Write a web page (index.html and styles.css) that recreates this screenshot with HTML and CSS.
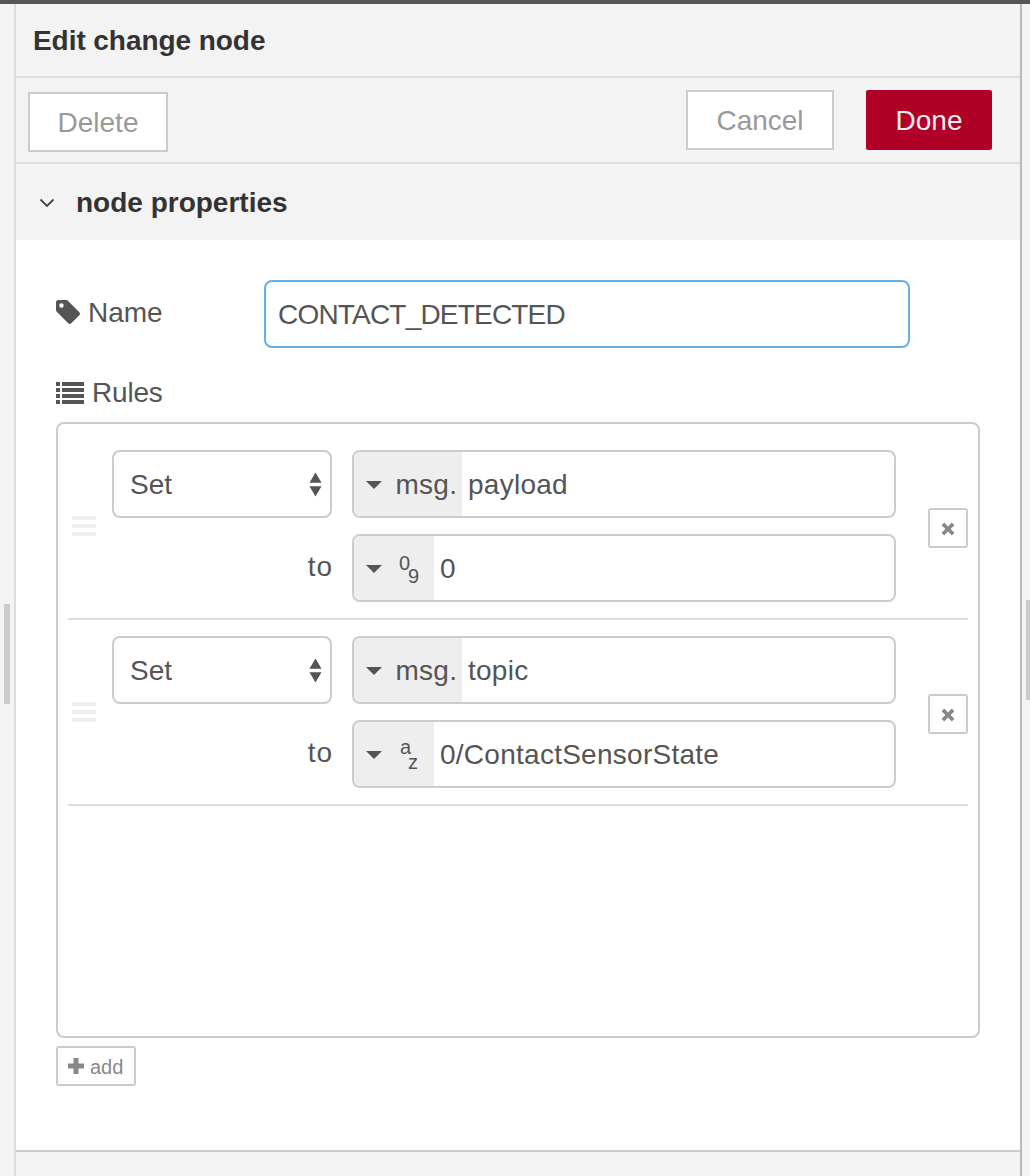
FILE: index.html
```html
<!DOCTYPE html>
<html lang="en">
<head>
<meta charset="utf-8">
<title>Edit change node</title>
<link rel="stylesheet" href="styles.css">
</head>
<body>
<div class="topbar"></div>
<div class="shell">
  <span class="grip grip-left"></span>
  <span class="grip grip-right"></span>
  <main class="panel">
    <header class="title">Edit change node</header>
    <div class="toolbar">
      <button class="btn btn-delete">Delete</button>
      <div class="toolbar-right">
        <button class="btn btn-cancel">Cancel</button>
        <button class="btn btn-done">Done</button>
      </div>
    </div>
    <div class="section-head">
      <svg class="chevron" viewBox="0 0 16 10"><path d="M1.5 1.5 8 8l6.500-6.500" fill="none" stroke="#444" stroke-width="1.800"/></svg>
      <span>node properties</span>
    </div>
    <section class="body">
      <div class="name-row">
        <label class="label label-name">
          <svg class="icon-tag" viewBox="0 0 24 24"><path fill="#555" d="M0 2.500A2.500 2.500 0 0 1 2.500 0H10a3 3 0 0 1 2.100.9l11 11a2.500 2.500 0 0 1 0 3.500l-7.600 7.700a2.500 2.500 0 0 1-3.500 0l-11-11.100A3 3 0 0 1 0 10zM5.500 3.300a2.200 2.200 0 1 0 0 4.400 2.200 2.200 0 0 0 0-4.400z"/></svg>
          <span class="label-text">Name</span>
        </label>
        <input class="name-input" type="text" value="CONTACT_DETECTED">
      </div>
      <div class="label label-rules">
        <svg class="icon-list" viewBox="0 0 28 22"><path fill="#555" d="M0 0h4v4H0zM6 0h22v4H6zM0 6h4v4H0zM6 6h22v4H6zM0 12h4v4H0zM6 12h22v4H6zM0 18h4v4H0zM6 18h22v4H6z"/></svg>
        <span class="rules-text">Rules</span>
      </div>
      <div class="rule-list">
        <div class="rule">
          <div class="handle"><i></i><i></i><i></i></div>
          <div class="rule-grid">
            <div class="select"><span class="select-text">Set</span>
              <svg class="updown" viewBox="0 0 14 26"><path fill="#555" d="M7 0l6.500 11H.5zM.5 15h13L7 26z"/></svg>
            </div>
            <div class="typed">
              <span class="prefix"><i class="caret"></i><span class="prefix-text">msg.</span></span>
              <span class="value">payload</span>
            </div>
            <div class="to">to</div>
            <div class="typed">
              <span class="prefix prefix-short"><i class="caret"></i><span class="type-icon"><span class="up">0</span><span class="down">9</span></span></span>
              <span class="value">0</span>
            </div>
          </div>
          <button class="rule-del"><svg viewBox="0 0 14 14"><path fill="#888" d="M3.200.6 7 4.400 10.800.6l2.600 2.600L9.600 7l3.800 3.800-2.600 2.600L7 9.600l-3.800 3.800-2.600-2.600L4.400 7 .6 3.200z"/></svg></button>
        </div>
        <div class="rule">
          <div class="handle"><i></i><i></i><i></i></div>
          <div class="rule-grid">
            <div class="select"><span class="select-text">Set</span>
              <svg class="updown" viewBox="0 0 14 26"><path fill="#555" d="M7 0l6.500 11H.5zM.5 15h13L7 26z"/></svg>
            </div>
            <div class="typed">
              <span class="prefix"><i class="caret"></i><span class="prefix-text">msg.</span></span>
              <span class="value">topic</span>
            </div>
            <div class="to">to</div>
            <div class="typed">
              <span class="prefix prefix-short"><i class="caret"></i><span class="type-icon"><span class="up up-letter">a</span><span class="down">z</span></span></span>
              <span class="value">0/ContactSensorState</span>
            </div>
          </div>
          <button class="rule-del"><svg viewBox="0 0 14 14"><path fill="#888" d="M3.200.6 7 4.400 10.800.6l2.600 2.600L9.600 7l3.800 3.800-2.600 2.600L7 9.600l-3.800 3.800-2.600-2.600L4.400 7 .6 3.200z"/></svg></button>
        </div>
      </div>
      <button class="add-btn"><svg viewBox="0 0 16 16"><path fill="#888" d="M5.500 0h5v5.500H16v5h-5.500V16h-5v-5.500H0v-5h5.500z"/></svg><span class="add-text">add</span></button>
    </section>
    <footer class="foot"></footer>
  </main>
</div>
</body>
</html>
```
FILE: styles.css
```css
* { box-sizing: border-box; }
html, body { margin: 0; height: 100%; }
body {
  background: #f3f3f3;
  font-family: "Liberation Sans", Arial, sans-serif;
  font-size: 28px;
  color: #555;
  overflow: hidden;
}
.topbar { height: 4px; background: #555; }
.shell {
  position: relative;
  height: 1172px;
  padding: 0 8px 0 14px;
}
.grip { position: absolute; background: #ccc; }
.grip-left { left: 4px; top: 600px; width: 6px; height: 100px; }
.grip-right { right: 0; top: 596px; width: 4px; height: 100px; }
.panel {
  height: 100%;
  display: flex;
  flex-direction: column;
  background: #f3f3f3;
  border-left: 2px solid #ddd;
  border-right: 2px solid #bbb;
}
.title {
  height: 74px;
  flex: none;
  padding: 20px 0 0 17px;
  font-size: 28px;
  line-height: 34px;
  font-weight: 700;
  letter-spacing: -0.06px;
  color: #333;
  border-bottom: 2px solid #ddd;
}
.toolbar {
  height: 86px;
  flex: none;
  display: flex;
  justify-content: space-between;
  align-items: flex-start;
  padding: 12px 28px 0 12px;
  border-bottom: 2px solid #ddd;
}
.toolbar-right { display: flex; gap: 32px; }
.btn {
  height: 60px;
  font: 28px/1 "Liberation Sans", Arial, sans-serif;
  padding: 0;
  border: 2px solid #ccc;
  background: #fff;
  color: #999;
}
.btn-delete { width: 140px; margin-top: 2px; padding-top: 2px; }
.btn-cancel { width: 148px; padding-top: 1px; }
.btn-done {
  width: 126px;
  padding-top: 1px;
  background: #b00026;
  border-color: #b00026;
  border-radius: 2px;
  color: #eee;
}
.section-head {
  height: 76px;
  flex: none;
  display: flex;
  align-items: center;
  gap: 21px;
  padding: 2px 0 0 23px;
  font-size: 28px;
  font-weight: 700;
  color: #333;
}
.chevron { width: 16px; height: 10px; }
.body {
  flex: 1;
  background: #fff;
  padding: 40px 40px 0;
  border-bottom: 2px solid #ccc;
}
.name-row { display: flex; align-items: center; height: 68px; }
.label { display: flex; align-items: center; color: #555; }
.label-name { width: 208px; gap: 8px; height: 34px; margin-top: -4px; }
.label-text { padding-top: 2px; }
.rules-text { letter-spacing: -0.2px; }
.icon-tag { width: 24px; height: 24px; }
.icon-list { width: 28px; height: 22px; }
.name-input {
  width: 646px;
  height: 68px;
  border: 2px solid #66afe9;
  border-radius: 8px;
  padding: 2px 12px 0;
  font: 28px "Liberation Sans", Arial, sans-serif;
  letter-spacing: -0.8px;
  color: #555;
  outline: none;
}
.label-rules { gap: 8px; height: 34px; margin-top: 28px; }
.rule-list {
  margin-top: 12px;
  width: 924px;
  height: 616px;
  border: 2px solid #ccc;
  border-radius: 8px;
  padding: 0 10px;
}
.rule {
  display: flex;
  align-items: flex-start;
  padding: 16px 0 16px 4px;
  border-bottom: 2px solid #ddd;
}
.rule:first-child { padding-top: 26px; }
.handle {
  width: 24px;
  margin: 66px 16px 0 0;
  display: flex;
  flex-direction: column;
  gap: 4px;
}
.handle i { display: block; height: 4px; background: #eee; }
.rule-grid {
  display: grid;
  grid-template-columns: 220px 544px;
  grid-auto-rows: 68px;
  gap: 16px 20px;
}
.select {
  display: flex;
  align-items: center;
  justify-content: space-between;
  padding: 0 8px 0 16px;
  border: 2px solid #ccc;
  border-radius: 8px;
  background: #fff;
}
.select-text { padding-top: 2px; }
.updown { width: 13px; height: 25px; margin-top: 1px; }
.typed {
  display: flex;
  border: 2px solid #ccc;
  border-radius: 8px;
  overflow: hidden;
  align-items: stretch;
}
.prefix {
  display: flex;
  align-items: center;
  width: 108px;
  flex: none;
  background: #eee;
  padding-left: 12px;
}
.prefix-short { width: 80px; }
.prefix-text { letter-spacing: 0.25px; padding-top: 2px; margin-left: 0.5px; }
.caret {
  width: 0;
  height: 0;
  border-left: 8.500px solid transparent;
  border-right: 8.500px solid transparent;
  border-top: 8px solid #555;
  margin: 2px 13px 0 0;
  flex: none;
}
.value { padding: 2px 0 0 6px; align-self: center; letter-spacing: 0.26px; }
.to { text-align: right; align-self: center; padding-bottom: 2px; letter-spacing: 1px; margin-right: -1px; }
.type-icon { position: relative; width: 24px; height: 40px; font-size: 20px; line-height: 20px; }
.type-icon .up { position: absolute; left: 4px; top: 5px; }
.type-icon .up-letter { left: 5px; top: 3px; }
.type-icon .down { position: absolute; left: 13px; top: 18px; }
.rule-del {
  width: 40px;
  height: 40px;
  margin: 58px 0 0 32px;
  padding: 0;
  border: 2px solid #ccc;
  border-radius: 3px;
  background: #fff;
  display: flex;
  align-items: center;
  justify-content: center;
}
.rule-del svg { width: 14px; height: 14px; margin-top: 2px; }
.add-btn {
  display: flex;
  align-items: center;
  gap: 6px;
  width: 80px;
  height: 40px;
  margin-top: 8px;
  padding: 0 0 0 10px;
  border: 2px solid #ccc;
  border-radius: 3px;
  background: #fff;
  color: #888;
  font: 20px "Liberation Sans", Arial, sans-serif;
}
.add-text { padding-top: 2px; }
.add-btn svg { width: 16px; height: 16px; flex: none; }
.foot { height: 24px; flex: none; }
```
